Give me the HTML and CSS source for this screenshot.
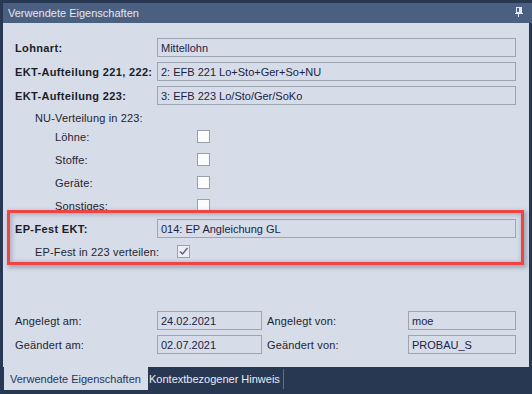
FILE: index.html
```html
<!DOCTYPE html>
<html lang="de">
<head>
<meta charset="utf-8">
<link rel="stylesheet" href="styles.css">
</head>
<body>
<div class="window">
  <div class="titlebar">
    <span class="title">Verwendete Eigenschaften</span>
    <svg class="pin" width="8" height="10" viewBox="0 0 8 10">
      <rect x="1.5" y="0.5" width="5" height="5" fill="none" stroke="#e4e9f2"/>
      <rect x="4" y="1" width="2" height="4" fill="#e4e9f2"/>
      <rect x="0" y="6" width="8" height="1" fill="#e4e9f2"/>
      <rect x="3" y="7" width="1" height="3" fill="#e4e9f2"/>
    </svg>
  </div>
  <div class="content">
    <div class="row">
      <span class="label bold">Lohnart:</span>
      <div class="field">Mittellohn</div>
    </div>
    <div class="row">
      <span class="label bold">EKT-Aufteilung 221, 222:</span>
      <div class="field">2: EFB 221 Lo+Sto+Ger+So+NU</div>
    </div>
    <div class="row">
      <span class="label bold">EKT-Aufteilung 223:</span>
      <div class="field">3: EFB 223 Lo/Sto/Ger/SoKo</div>
    </div>
    <div class="row sub1 nu">
      <span class="label">NU-Verteilung in 223:</span>
    </div>
    <div class="row sub2 cb-row first">
      <span class="label">Löhne:</span>
      <span class="check"></span>
    </div>
    <div class="row sub2 cb-row">
      <span class="label">Stoffe:</span>
      <span class="check"></span>
    </div>
    <div class="row sub2 cb-row">
      <span class="label">Geräte:</span>
      <span class="check"></span>
    </div>
    <div class="row sub2 cb-row">
      <span class="label">Sonstiges:</span>
      <span class="check"></span>
    </div>
    <div class="row ep">
      <span class="label bold">EP-Fest EKT:</span>
      <div class="field">014: EP Angleichung GL</div>
    </div>
    <div class="row sub1 cb-row ep2">
      <span class="label">EP-Fest in 223 verteilen:</span>
      <span class="check checked">
        <svg width="11" height="11" viewBox="0 0 11 11"><path d="M2 5.5 L4.5 8 L9.5 2" fill="none" stroke="#5c6478" stroke-width="1.5"/></svg>
      </span>
    </div>
    <div class="highlight"></div>

    <div class="meta">
      <span class="label">Angelegt am:</span>
      <div class="field">24.02.2021</div>
      <span class="label">Angelegt von:</span>
      <div class="field">moe</div>
      <span class="label">Geändert am:</span>
      <div class="field">02.07.2021</div>
      <span class="label">Geändert von:</span>
      <div class="field">PROBAU_S</div>
    </div>
  </div>
  <div class="tabs">
    <span class="tab active">Verwendete Eigenschaften</span>
    <span class="tab">Kontextbezogener Hinweis</span>
  </div>
</div>
</body>
</html>
```

FILE: styles.css
```css
html, body {
  margin: 0;
  padding: 0;
}
body {
  background: #283852;
  width: 532px;
  height: 394px;
  overflow: hidden;
  font-family: "Liberation Sans", Arial, sans-serif;
  font-size: 11px;
}
.window {
  display: flex;
  flex-direction: column;
  height: 394px;
  padding-top: 3px;
  box-sizing: border-box;
}
.titlebar {
  height: 20px;
  margin-left: 3px;
  background: #4b5f80;
  display: flex;
  align-items: center;
  justify-content: space-between;
  padding: 0 9px 0 5px;
  color: #e2e7f0;
  font-size: 11px;
}
.pin {
  display: block;
  margin-top: -2px;
}
.content {
  flex: 1;
  margin: 0 3px 0 3px;
  background: #d6dce8;
  padding: 15px 13px 13px 12px;
  display: flex;
  flex-direction: column;
  position: relative;
  color: #1f2430;
}
.row {
  display: flex;
  align-items: center;
  height: 19px;
  margin-bottom: 5px;
}
.label {
  width: 142px;
  flex: none;
  white-space: nowrap;
  letter-spacing: 0.15px;
}
.bold {
  font-weight: bold;
  color: #1a1e28;
  letter-spacing: 0.35px;
}
.field {
  flex: 1;
  height: 19px;
  box-sizing: border-box;
  border: 1px solid #9da5b3;
  padding: 0 0 0 3px;
  display: flex;
  align-items: center;
  color: #1b2448;
  white-space: nowrap;
  overflow: hidden;
}
.sub1 {
  padding-left: 20px;
}
.sub1 .label {
  width: 122px;
}
.sub2 {
  padding-left: 40px;
}
.sub2 .label {
  width: 142px;
}
.nu {
  margin-top: -2px;
  margin-bottom: 0;
}
.cb-row {
  margin-bottom: 4px;
}
.check {
  width: 13px;
  height: 13px;
  box-sizing: border-box;
  border: 1px solid #9aa1ad;
  background: #fbfcfd;
  display: flex;
  align-items: center;
  justify-content: center;
}
.check.checked {
  background: #eceef3;
}
.check svg {
  display: block;
}
.ep {
  margin-bottom: 4px;
}
.ep2 .label {
  width: 122px;
}
.ep2 .check {
  margin-left: 20px;
}
.highlight {
  position: absolute;
  left: 4px;
  top: 187px;
  width: 517px;
  height: 55px;
  box-sizing: border-box;
  border: 3px solid #f04444;
  box-shadow: 2px 2px 4px 1px rgba(70, 76, 96, 0.35), inset 1px 1px 4px 1px rgba(70, 76, 96, 0.3);
  pointer-events: none;
}
.meta {
  margin-top: auto;
  display: grid;
  grid-template-columns: 142px 105px 146px 108px;
  row-gap: 5px;
  align-items: center;
}
.meta .label:nth-of-type(2),
.meta .label:nth-of-type(4) {
  padding-left: 5px;
  width: auto;
}
.tabs {
  height: 27px;
  display: flex;
  align-items: flex-start;
  color: #e8ecf4;
  padding-left: 4px;
  font-size: 11px;
}
.tab {
  white-space: nowrap;
  display: flex;
  align-items: center;
}
.tab.active {
  height: 23px;
  width: 144px;
  box-sizing: border-box;
  background: #d6dce8;
  color: #27365a;
  padding: 0 0 0 6px;
}
.tab:not(.active) {
  padding: 0 0 0 1px;
  margin-top: 2px;
  height: 20px;
  width: 136px;
  box-sizing: border-box;
  border-right: 1px solid #5d6d8c;
}
```
